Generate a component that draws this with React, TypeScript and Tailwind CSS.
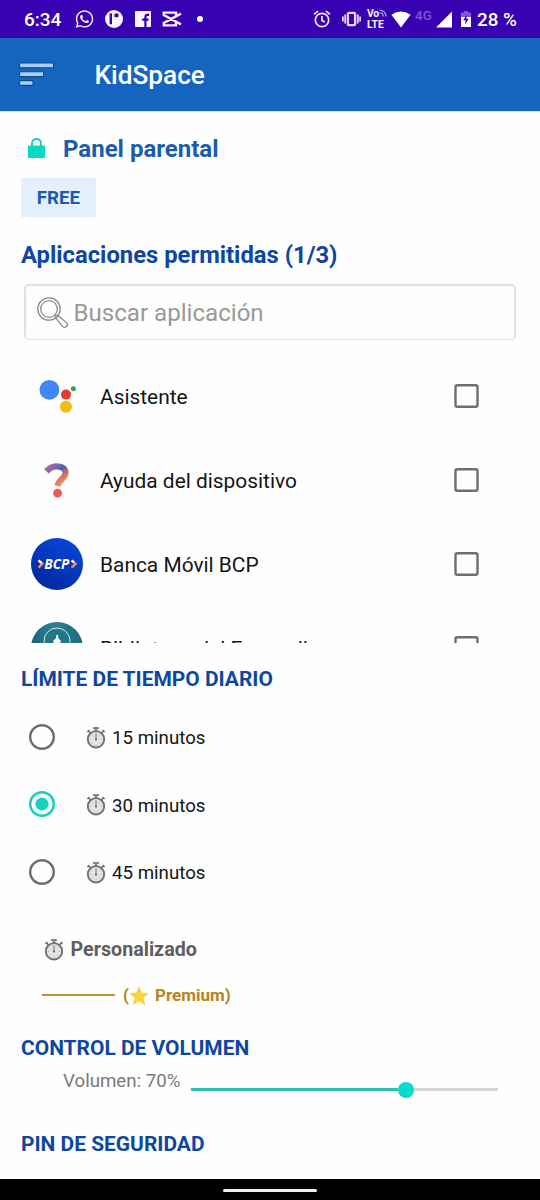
import React from 'react';
import { FaWhatsapp } from 'react-icons/fa';

interface AppEntry {
  name: string;
  icon: React.ReactNode;
}

const AssistantIcon = () => (
  <svg width="52" height="52" viewBox="0 0 52 52">
    <circle cx="18.4" cy="19.8" r="9.9" fill="#4285F4" />
    <circle cx="35" cy="24.6" r="5" fill="#E23B30" />
    <circle cx="42.4" cy="18.8" r="2.5" fill="#34A055" />
    <circle cx="35" cy="36.8" r="6" fill="#F6BB0A" />
  </svg>
);

const HelpIcon = () => (
  <svg width="52" height="52" viewBox="0 0 52 52" fill="none">
    <defs>
      <linearGradient id="hook" x1="14" y1="14" x2="28" y2="33" gradientUnits="userSpaceOnUse">
        <stop offset="0" stopColor="#C0609C" />
        <stop offset="0.2" stopColor="#8A68B0" />
        <stop offset="0.46" stopColor="#3A62BC" />
        <stop offset="0.64" stopColor="#D0646C" />
        <stop offset="1" stopColor="#F89A54" />
      </linearGradient>
    </defs>
    <path d="M15.4 17.4C19.2 13 24.4 11.6 28.9 12.8C34.4 14.2 35.8 18.4 33.6 22C31.4 25.8 27.6 26.6 26.4 32" stroke="url(#hook)" strokeWidth="6.2" />
    <circle cx="26.6" cy="39.2" r="4.4" fill="#EC5A58" />
  </svg>
);

const BankIcon = () => (
  <svg width="52" height="52" viewBox="0 0 52 52" fill="none">
    <defs>
      <linearGradient id="bank" x1="10" y1="52" x2="42" y2="0" gradientUnits="userSpaceOnUse">
        <stop offset="0" stopColor="#02269A" />
        <stop offset="1" stopColor="#0648DC" />
      </linearGradient>
    </defs>
    <circle cx="26" cy="26" r="26" fill="url(#bank)" />
    <path d="M7.5 22.6L11.4 25.8L7.5 29.6" stroke="#F58A58" strokeWidth="2.4" />
    <path d="M7.5 22.4L10.8 25" stroke="#fff" strokeWidth="2" />
    <path d="M40.6 22.6L44.6 25.8L40.6 29.6" stroke="#F58A58" strokeWidth="2.4" />
    <path d="M40.6 22.4L43.2 24.4" stroke="#fff" strokeWidth="2" />
    <text x="25.8" y="30.6" textAnchor="middle" textLength="25" lengthAdjust="spacingAndGlyphs" fontSize="13.6" fontWeight="700" fontStyle="italic" fontFamily="Open Sans, sans-serif" fill="#fff">BCP</text>
  </svg>
);

const LibraryIcon = () => (
  <svg width="52" height="52" viewBox="0 0 52 52" fill="none">
    <defs>
      <linearGradient id="library" x1="0" y1="20" x2="52" y2="4" gradientUnits="userSpaceOnUse">
        <stop offset="0" stopColor="#13667F" />
        <stop offset="0.5" stopColor="#2E8094" />
        <stop offset="1" stopColor="#176680" />
      </linearGradient>
    </defs>
    <circle cx="26" cy="26" r="26" fill="url(#library)" />
    <circle cx="26" cy="19" r="13" fill="#23768C" stroke="#E4F3F5" strokeWidth="0.9" />
    <path d="M25.2 13H27.2V16L29.6 18.5V24H22.4V18.5L25.2 16Z" fill="#fff" />
  </svg>
);

const APPS: AppEntry[] = [
  { name: 'Asistente', icon: <AssistantIcon /> },
  { name: 'Ayuda del dispositivo', icon: <HelpIcon /> },
  { name: 'Banca Móvil BCP', icon: <BankIcon /> },
  { name: 'Biblioteca del Evangelio', icon: <LibraryIcon /> },
];

const LIMITS = [15, 30, 45];

const Stopwatch = () => (
  <svg className="shrink-0" width="20" height="22" viewBox="0 0 20 22" fill="none">
    <path d="M7.2 1.1H12.8" stroke="#6B6B6B" strokeWidth="1.8" />
    <path d="M10 1V4.5" stroke="#8A8A8A" strokeWidth="2.6" />
    <path d="M1.4 4.9L3.4 3.2M18.6 4.9L16.6 3.2M3 4.3L4.8 6.4M17 4.3L15.2 6.4" stroke="#707070" strokeWidth="1.6" />
    <circle cx="10" cy="12.3" r="8.2" fill="#E2E3E4" stroke="#717171" strokeWidth="1.9" />
    <path d="M10 6V7.6M10 17V18.6M3.8 12.3H5.2M14.8 12.3H16.2M5.7 8L6.6 8.9M14.3 8L13.4 8.9M5.7 16.6L6.6 15.7M14.3 16.6L13.4 15.7" stroke="#A5A5A5" strokeWidth="0.7" />
    <path d="M10 6.8V13" stroke="#6A6A6A" strokeWidth="0.9" />
    <circle cx="10" cy="12.6" r="1.1" fill="#686868" />
  </svg>
);

const StatusBar = () => (
  <div className="flex h-[38px] shrink-0 items-center bg-[#3700B0] pl-6 pr-6 text-white">
    <span className="mt-[1px] w-[51px] whitespace-nowrap text-[19px] font-medium leading-none">6:34</span>
    <FaWhatsapp className="h-[20px] w-[19px] shrink-0 text-[#F3E9FF]" />
    <svg className="ml-[11px] shrink-0" width="18" height="18" viewBox="0 0 18 18">
      <circle cx="9" cy="9" r="9" fill="#FBF5FF" />
      <path d="M4.6 3.4H7V14.2H4.6Z" fill="#3700B0" />
      <rect x="9.4" y="3.4" width="4" height="3.8" rx="1" fill="#3700B0" />
    </svg>
    <svg className="ml-3 shrink-0" width="16" height="16" viewBox="0 0 16 16" fill="none">
      <rect width="16" height="16" rx="0.8" fill="#FBF5FF" />
      <path d="M14 3.9H12.6Q10.4 3.9 10.4 6.2V16M7.2 8.6H13.6" stroke="#3700B0" strokeWidth="2.2" />
    </svg>
    <svg className="ml-[11px] shrink-0" width="20" height="16" viewBox="0 0 20 16" fill="none" stroke="#F8F0FF" strokeWidth="2.4">
      <path d="M19 2.6L1.8 12V14.4H14V11.8M19 13.4L1.8 4V1.6H14V4.2" />
    </svg>
    <span className="ml-[15px] h-[6px] w-[6px] shrink-0 rounded-full bg-white" />

    <svg className="ml-auto shrink-0" width="18" height="18" viewBox="0 0 18 18" fill="none" stroke="#F3E9FF" strokeWidth="1.7">
      <circle cx="9" cy="10" r="6.7" />
      <path d="M9 6V10.4L11.8 12M1 4.4L5 1.2M17 4.4L13 1.2" />
    </svg>
    <svg className="ml-[11px] shrink-0" width="19" height="16" viewBox="0 0 19 16" fill="none" stroke="#E2D4FA" strokeWidth="2.3">
      <rect x="5.9" y="1.9" width="7.2" height="12.2" rx="0.8" />
      <path d="M3.2 3.6V12.4M15.8 3.6V12.4M0.9 5.5V10.5M18.1 5.5V10.5" strokeWidth="1.8" />
    </svg>
    <div className="ml-[6px] flex w-[20px] shrink-0 flex-col text-[10.4px] font-bold leading-[11px] text-[#F8F0FF]">
      <div className="flex h-[11px] tracking-[-0.2px]">
        Vo
        <svg className="mt-[1px] shrink-0" width="8" height="8" viewBox="0 0 8 8" fill="none" stroke="#CDB6F4" strokeWidth="1.1">
          <path d="M0.5 1A6.5 6.5 0 0 1 7 7.5M0.5 3.8A3.8 3.8 0 0 1 4.2 7.5" />
        </svg>
      </div>
      <div className="h-[11px]">LTE</div>
    </div>
    <svg className="ml-1 shrink-0" width="20" height="17" viewBox="0 0 20 17">
      <path d="M0.4 3.8Q10 -3 19.6 3.8L10 16.4Z" fill="#fff" />
    </svg>
    <span className="mb-[6px] ml-[4px] w-[21px] text-[13.5px] font-medium leading-none tracking-[0.2px] text-[#7E55DC]">4G</span>
    <svg className="shrink-0" width="16" height="17" viewBox="0 0 16 17">
      <path d="M16 0.4V16.4H0Z" fill="#fff" />
    </svg>
    <svg className="ml-[9px] shrink-0" width="10" height="16" viewBox="0 0 10 16">
      <path d="M0 1.5H3V0H7V1.5H10V6H0Z" fill="#8157DE" />
      <path d="M0 6H10V16H0Z" fill="#fff" />
      <path d="M6 3.5L2.2 9.2H4.6L4 13.6L7.8 7.8H5.4Z" fill="#3700B0" />
    </svg>
    <span className="ml-[6px] mt-[2px] w-[39px] whitespace-nowrap text-[18.8px] font-medium leading-none">28 %</span>
  </div>
);

const AppBar = () => (
  <header className="flex h-[73px] shrink-0 items-center bg-[#1565C0] pl-[19px]">
    <svg className="shrink-0" width="36" height="25" viewBox="0 0 36 25" fill="#A9CDF3" stroke="#0E478B" strokeWidth="1.1">
      <rect x="0.6" y="1" width="34" height="4.8" rx="0.5" />
      <rect x="0.6" y="9.8" width="24" height="4.8" rx="0.5" />
      <rect x="0.6" y="18.6" width="13.4" height="4.8" rx="0.5" />
    </svg>
    <h1 className="ml-[39.5px] mt-[2px] text-[26.2px] font-medium leading-none text-white">KidSpace</h1>
  </header>
);

const SectionTitle = ({ children }: { children: React.ReactNode }) => (
  <h2 className="whitespace-nowrap text-[20.95px] font-bold leading-[38px] text-[#0D47A1]">{children}</h2>
);

const SearchField = () => (
  <div className="ml-[3px] mt-[9px] flex h-[56px] w-[492px] shrink-0 items-center rounded-[5px] border-2 border-b-[1.5px] border-[#E0E0E0] pl-[10px]">
    <svg className="shrink-0" width="34" height="34" viewBox="0 0 34 34" fill="none" stroke="#8C8C8C" strokeWidth="1.3">
      <circle cx="13" cy="13" r="11.2" />
      <circle cx="13" cy="13" r="8.3" />
      <path d="M19.2 21.4Q18.8 20.4 19.8 19.6Q20.8 18.8 21.8 19.4L30.4 26.6Q32.4 28.7 30.6 30.6Q28.6 32.3 26.6 30.4Z" />
    </svg>
    <span className="ml-[3.5px] mt-[2px] text-[24.1px] leading-none text-[#999999]">Buscar aplicación</span>
  </div>
);

const CheckboxMark = () => (
  <svg className="shrink-0" width="25" height="24" viewBox="0 0 25 24" fill="none">
    <rect x="1.5" y="1.2" width="22" height="21.6" rx="1.8" stroke="#6E6E6E" strokeWidth="2.4" />
  </svg>
);

const RadioMark = ({ checked }: { checked: boolean }) => (
  <svg className="shrink-0" width="26" height="26" viewBox="0 0 26 26" fill="none">
    <circle
      cx="13"
      cy="13"
      r="11.8"
      fill={checked ? '#EFFFFC' : 'none'}
      stroke={checked ? '#1CCBB8' : '#6E6E6E'}
      strokeWidth="2.4"
    />
    {checked && <circle cx="13" cy="13" r="6.5" fill="#12D3C0" />}
  </svg>
);

export default function App() {
  return (
    <div className="flex h-[1200px] w-[540px] flex-col overflow-hidden bg-[#FEFEFE] font-['Roboto',sans-serif]">
      <StatusBar />
      <AppBar />

      <main className="flex flex-1 flex-col border-t border-[#D8EAF5] px-[21px]">
        <div className="mt-[12px] flex h-[50px] shrink-0 items-center">
          <svg className="ml-[6px] shrink-0" width="19" height="22" viewBox="0 0 19 22" fill="none">
            <rect x="1" y="7.6" width="17" height="12.4" rx="0.8" fill="#06DAC4" />
            <path d="M5 8V5.4C5 -0.6 14 -0.6 14 5.4V8" stroke="#1DD3BE" strokeWidth="2" />
          </svg>
          <span className="ml-[17px] text-[24px] font-bold leading-none text-[#1A5CAD]">Panel parental</span>
        </div>

        <div className="mt-[4px] flex h-[39px] w-[75px] shrink-0 items-center justify-center bg-[#E3F0FC]">
          <span className="mt-[2px] text-[18.7px] font-bold leading-none text-[#1A5CAD]">FREE</span>
        </div>

        <h2 className="mt-[18px] whitespace-nowrap text-[23.8px] font-bold leading-[40px] text-[#0D47A1]">
          Aplicaciones permitidas (1/3)
        </h2>
        <SearchField />

        <ul className="mt-[14px] h-[289px] shrink-0 overflow-hidden">
          {APPS.map((app) => (
            <li key={app.name} className="flex h-[84px] items-center pl-[10px] pr-[40px]">
              {app.icon}
              <span className="ml-[17px] mt-[2px] flex-1 text-[20.9px] leading-none text-[#151515]">{app.name}</span>
              <CheckboxMark />
            </li>
          ))}
        </ul>

        <div className="mt-[17px] shrink-0">
          <SectionTitle>LÍMITE DE TIEMPO DIARIO</SectionTitle>
        </div>
        <div className="mt-[5px] shrink-0">
          {LIMITS.map((minutes) => (
            <div key={minutes} className="flex h-[67.5px] items-center pl-[8px]">
              <RadioMark checked={minutes === 30} />
              <div className="ml-[31px] mt-[2px] flex items-center">
                <Stopwatch />
                <span className="ml-[6px] mt-[2px] text-[18.7px] leading-none text-[#151515]">{minutes} minutos</span>
              </div>
            </div>
          ))}
        </div>

        <div className="mt-[24px] flex h-[40px] shrink-0 items-center pl-[23px]">
          <Stopwatch />
          <span className="ml-[6.5px] text-[19.7px] font-bold leading-none text-[#5E5E5E]">Personalizado</span>
        </div>
        <div className="mt-[11px] flex h-[30px] shrink-0 items-center pl-[21px] text-[17px] font-bold leading-none text-[#B5841A]">
          <span className="mb-[2px] h-[2px] w-[73px] bg-[#BE9332]" />
          <span className="ml-[8px]">(</span>
          <svg className="shrink-0" width="20" height="20" viewBox="0 0 20 20">
            <path d="M10 1L12.5 7L19 7.5L14 11.7L15.7 18.4L10 14.8L4.3 18.4L6 11.7L1 7.5L7.5 7Z" fill="#FBD43A" stroke="#F6C531" strokeWidth="0.7" strokeLinejoin="round" />
          </svg>
          <span className="ml-[6px]">Premium)</span>
        </div>

        <div className="mt-[18px] shrink-0">
          <SectionTitle>CONTROL DE VOLUMEN</SectionTitle>
        </div>
        <div className="flex h-[46px] shrink-0 items-start pl-[42px]">
          <span className="mt-[4px] w-[128px] whitespace-nowrap text-[18.7px] leading-[20px] text-[#7A7A7A]">Volumen: 70%</span>
          <div className="mt-[14px] flex h-[18px] w-[307px] items-center">
            <div className="h-[3px] w-[207px] bg-[#2BC0B1]" />
            <div className="h-[16px] w-[16px] shrink-0 rounded-full bg-[#06DAC9]" />
            <div className="h-[3px] flex-1 bg-[#D6D6D6]" />
          </div>
        </div>

        <div className="mt-[12px] shrink-0">
          <SectionTitle>PIN DE SEGURIDAD</SectionTitle>
        </div>
      </main>

      <div className="flex h-[21px] shrink-0 items-center justify-center bg-black pt-[2px]">
        <span className="h-[3px] w-[94px] rounded-full bg-[#F4EDF4]" />
      </div>
    </div>
  );
}
